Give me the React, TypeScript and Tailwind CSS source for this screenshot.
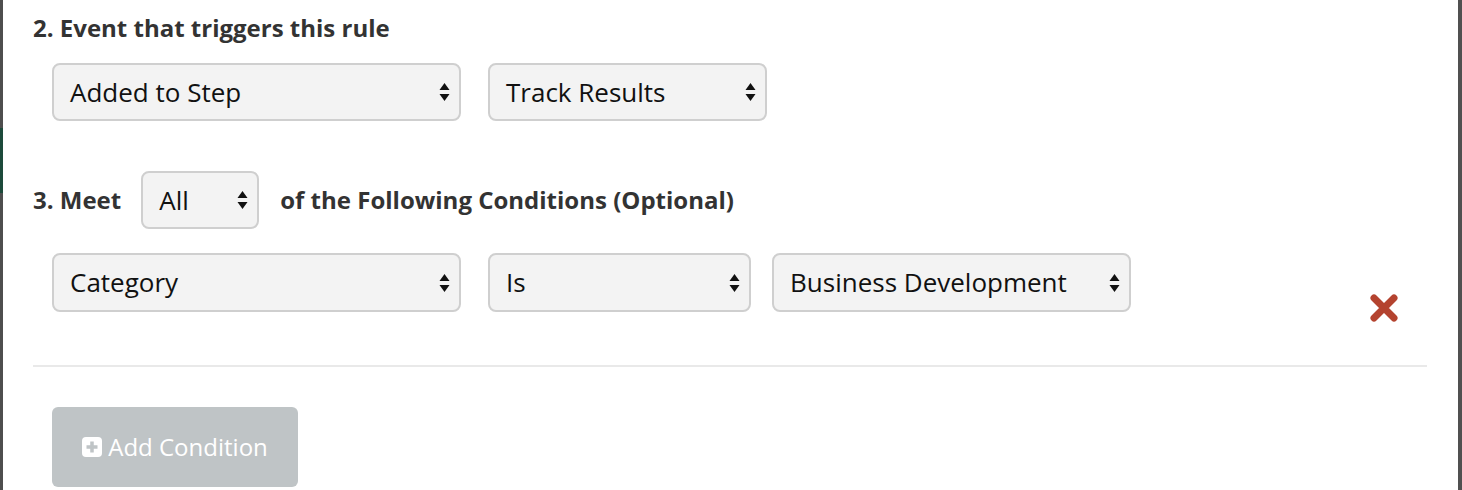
import React from 'react';

function Arrows() {
  return (
    <svg width="11" height="20" viewBox="0 0 11 20" className="shrink-0">
      <path d="M5.5 1 L10.5 8 H0.5 Z" fill="#111" />
      <path d="M5.5 19 L10.5 12 H0.5 Z" fill="#111" />
    </svg>
  );
}

function Select({ label, className }: { label: string; className: string }) {
  return (
    <div
      className={`flex h-[58px] items-center justify-between rounded-[8px] border-2 border-[#cfcfcf] bg-[#f3f3f3] pl-[16px] pr-[9px] text-[26px] text-[#111] ${className}`}
    >
      <span>{label}</span>
      <Arrows />
    </div>
  );
}

export default function App() {
  return (
    <div className="flex h-[490px] w-[1462px] overflow-hidden bg-white font-['Open_Sans',sans-serif]">
      <div className="flex w-[3px] shrink-0 flex-col bg-[#4e4e4e]">
        <div className="mt-[128px] h-[65px] bg-[#1c4a3b]" />
      </div>

      <div className="flex flex-1 flex-col pl-[30px] pr-[30px]">
        <h2 className="mt-[13px] text-[24px] font-bold leading-[30px] text-[#333]">2. Event that triggers this rule</h2>

        <div className="mt-[20px] flex gap-[27px] pl-[19px]">
          <Select label="Added to Step" className="w-[409px]" />
          <Select label="Track Results" className="w-[279px]" />
        </div>

        <div className="mt-[50px] flex items-center">
          <span className="text-[24px] font-bold text-[#333]">3. Meet</span>
          <Select label="All" className="ml-[20px] w-[118px]" />
          <span className="ml-[21px] text-[24px] font-bold text-[#333]">of the Following Conditions (Optional)</span>
        </div>

        <div className="mt-[24px] flex items-start pl-[19px]">
          <Select label="Category" className="h-[59px] w-[409px]" />
          <Select label="Is" className="ml-[27px] h-[59px] w-[263px]" />
          <Select label="Business Development" className="ml-[21px] h-[59px] w-[359px]" />
          <svg width="30" height="30" viewBox="0 0 30 30" className="ml-[238px] mt-[40px]">
            <path d="M5 5 L25 25 M25 5 L5 25" stroke="#b4432f" strokeWidth="7" strokeLinecap="round" />
          </svg>
        </div>

        <div className="mt-[42px] h-[2px] w-[1394px] shrink-0 bg-[#e9e9e9]" />

        <div className="mt-[40px] pl-[19px]">
          <button className="flex h-[80px] w-[246px] items-center justify-center gap-[6px] rounded-[6px] bg-[#bfc4c6] text-[24px] text-white">
            <svg width="20" height="20" viewBox="0 0 20 20">
              <rect x="0" y="0" width="20" height="20" rx="4" fill="#fff" />
              <path d="M10 4.5 V15.5 M4.5 10 H15.5" stroke="#bfc4c6" strokeWidth="3.5" />
            </svg>
            <span>Add Condition</span>
          </button>
        </div>
      </div>

      <div className="w-[4px] shrink-0 bg-[#505050]" />
    </div>
  );
}
